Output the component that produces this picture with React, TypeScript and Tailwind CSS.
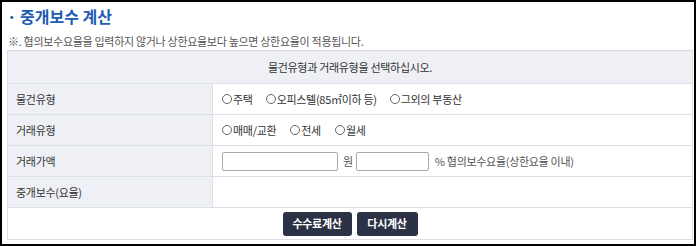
import { useState } from "react";

const propertyTypes = ["주택", "오피스텔(85㎡이하 등)", "그외의 부동산"];
const dealTypes = ["매매/교환", "전세", "월세"];

function Radio({
  name,
  label,
  checked,
  onChange,
}: {
  name: string;
  label: string;
  checked: boolean;
  onChange: () => void;
}) {
  return (
    <label className="flex items-center cursor-pointer">
      <input
        type="radio"
        name={name}
        checked={checked}
        onChange={onChange}
        className="appearance-none w-[10px] h-[10px] rounded-full border border-[#666] mr-[1px] checked:bg-[#2b3245]"
      />
      {label}
    </label>
  );
}

function Row({ label, children }: { label: string; children?: React.ReactNode }) {
  return (
    <div className="flex h-[31px] border-t border-[#dcdfe6]">
      <div className="w-[205px] shrink-0 bg-[#eef0f5] border-r border-[#dcdfe6] flex items-center pl-[8px] text-[#333]">
        {label}
      </div>
      <div className="flex-1 flex items-center pl-[9px]">{children}</div>
    </div>
  );
}

function FeeCalculator() {
  const [property, setProperty] = useState<string | null>(null);
  const [deal, setDeal] = useState<string | null>(null);
  const [price, setPrice] = useState("");
  const [rate, setRate] = useState("");

  const reset = () => {
    setProperty(null);
    setDeal(null);
    setPrice("");
    setRate("");
  };

  return (
    <div className="w-[696px] h-[246px] border-2 border-black bg-white pl-[5px] font-['Noto_Sans_CJK_KR',sans-serif] text-[11px] tracking-[-0.3px] text-[#333]">
      <h1 className="h-[31px] pt-[4px] text-[16px] tracking-normal font-bold text-[#1d5bb5] leading-[21px]">
        · 중개보수 계산
      </h1>
      <p className="h-[17px] pl-[1px] text-[#555] leading-[16px]">
        ※. 협의보수요율을 입력하지 않거나 상한요율보다 높으면 상한요율이 적용됩니다.
      </p>

      <div className="w-[686px] border border-[#dcdfe6] border-t-[#d3d7de]">
        <div className="h-[32px] bg-[#eef0f5] flex items-center justify-center">
          물건유형과 거래유형을 선택하십시오.
        </div>

        <Row label="물건유형">
          <div className="flex gap-[13px]">
            {propertyTypes.map((t) => (
              <Radio
                key={t}
                name="property"
                label={t}
                checked={property === t}
                onChange={() => setProperty(t)}
              />
            ))}
          </div>
        </Row>

        <Row label="거래유형">
          <div className="flex gap-[14px]">
            {dealTypes.map((t) => (
              <Radio
                key={t}
                name="deal"
                label={t}
                checked={deal === t}
                onChange={() => setDeal(t)}
              />
            ))}
          </div>
        </Row>

        <Row label="거래가액">
          <input
            value={price}
            onChange={(e) => setPrice(e.target.value)}
            className="w-[116px] h-[19px] border border-[#a9a9a9] rounded-[2px] px-1 outline-none"
          />
          <span className="ml-[5px] mr-[3px] text-[#555]">원</span>
          <input
            value={rate}
            onChange={(e) => setRate(e.target.value)}
            className="w-[73px] h-[19px] border border-[#a9a9a9] rounded-[2px] px-1 outline-none"
          />
          <span className="ml-[6px] text-[#555]">% 협의보수요율(상한요율 이내)</span>
        </Row>

        <Row label="중개보수(요율)" />

        <div className="h-[32px] border-t border-[#dcdfe6] flex items-center justify-center gap-[5px]">
          <button className="w-[69px] h-[24px] bg-[#2b3245] text-white font-bold rounded-[3px]">
            수수료계산
          </button>
          <button
            onClick={reset}
            className="w-[61px] h-[24px] bg-[#2b3245] text-white font-bold rounded-[3px]"
          >
            다시계산
          </button>
        </div>
      </div>
    </div>
  );
}

export default FeeCalculator;
